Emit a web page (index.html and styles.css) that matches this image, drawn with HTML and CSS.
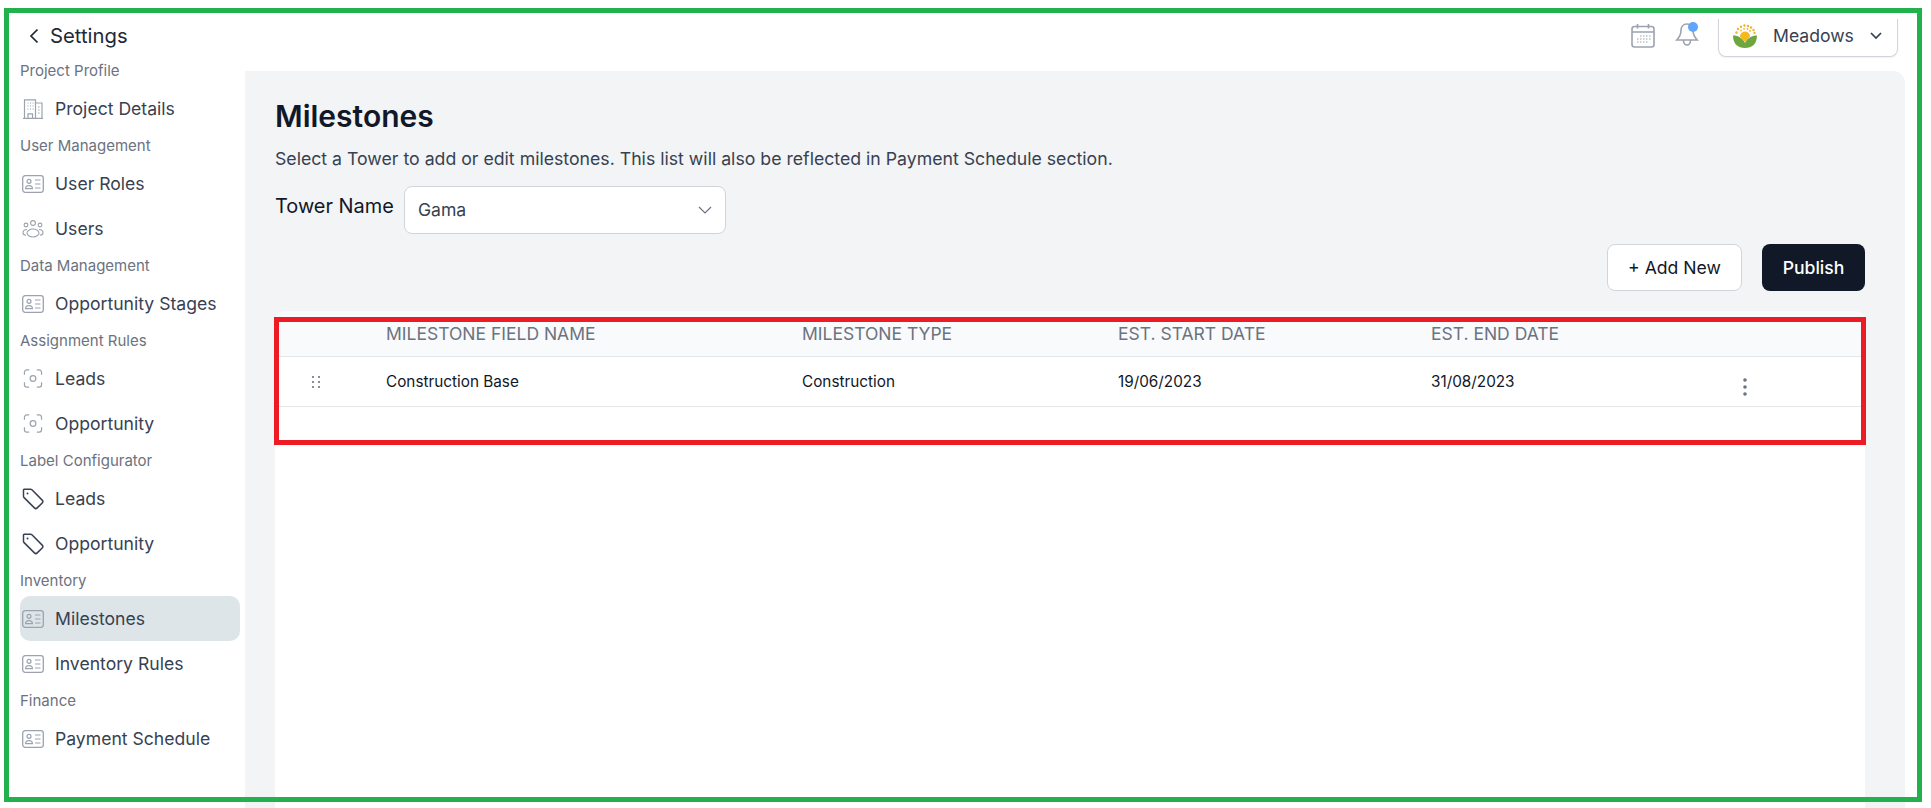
FILE: index.html
```html
<!DOCTYPE html>
<html lang="en">
<head>
<meta charset="utf-8">
<title>Milestones</title>
<link rel="stylesheet" href="styles.css">
</head>
<body>
<svg class="defs" width="0" height="0" aria-hidden="true">
  <symbol id="i-card" viewBox="0 0 22 18">
    <rect x="0.7" y="0.7" width="20.6" height="16.6" rx="2.5" fill="none" stroke="currentColor" stroke-width="1.3"/>
    <circle cx="7" cy="6.3" r="2" fill="none" stroke="currentColor" stroke-width="1.2"/>
    <path d="M3.6 13.6c0-2 1.5-3 3.4-3s3.4 1 3.4 3z" fill="none" stroke="currentColor" stroke-width="1.2"/>
    <path d="M13 5h5.5M13 9h5.5M13 13h5.5" fill="none" stroke="currentColor" stroke-width="1.2"/>
  </symbol>
  <symbol id="i-scan" viewBox="0 0 20 20">
    <path d="M1 6V3.5A2.5 2.5 0 0 1 3.500 1H6M14 1h2.500A2.500 2.500 0 0 1 19 3.500V6M19 14v2.500a2.500 2.500 0 0 1-2.500 2.500H14M6 19H3.500A2.500 2.500 0 0 1 1 16.500V14" fill="none" stroke="currentColor" stroke-width="1.300"/>
    <circle cx="10" cy="10" r="3" fill="none" stroke="currentColor" stroke-width="1.300"/>
  </symbol>
  <symbol id="i-tag" viewBox="0 0 22 22">
    <path d="M2.200 1.200h6.300a2 2 0 0 1 1.400.6l10.300 10.300a2 2 0 0 1 0 2.800l-5 5a2 2 0 0 1-2.800 0L2.100 9.600a2 2 0 0 1-.6-1.400V2a.8.8 0 0 1 .7-.8z" fill="none" stroke="currentColor" stroke-width="1.500"/>
    <circle cx="5.500" cy="5.500" r="1" fill="currentColor"/>
  </symbol>
</svg>

<div class="app">
  <aside class="sidebar">
    <div class="back">
      <svg class="back-icon" viewBox="0 0 10 16" width="10" height="16"><path d="M8.500 1.500L2 8l6.500 6.500" fill="none" stroke="currentColor" stroke-width="1.700"/></svg>
      <span>Settings</span>
    </div>
    <nav class="nav">
      <div class="nav-label">Project Profile</div>
      <a class="nav-item"><svg class="nav-icon building" viewBox="0 0 22 20"><path d="M1 19.300h20M2.500 19.300V.8h11v18.500M13.500 4h6.500v15.300M6 19.300v-4.500h4.500v4.500M5.500 4h1M8 4h1M10.500 4h1M5.500 7h1M8 7h1M10.500 7h1M5.500 10h1M8 10h1M10.500 10h1M16 8h1.500M16 11h1.500M16 14h1.500" fill="none" stroke="currentColor" stroke-width="1.200"/></svg>Project Details</a>
      <div class="nav-label">User Management</div>
      <a class="nav-item"><svg class="nav-icon"><use href="#i-card"/></svg>User Roles</a>
      <a class="nav-item"><svg class="nav-icon" viewBox="0 0 22 18"><g fill="none" stroke="currentColor" stroke-width="1.100"><circle cx="11" cy="3" r="2.400"/><circle cx="4" cy="5" r="1.900"/><circle cx="18" cy="5" r="1.900"/><ellipse cx="11" cy="13" rx="6" ry="4"/><path d="M5 9.500C2.500 9.500 1 11 1 13c0 1 1 2 3 2.200M17 9.500c2.500 0 4 1.500 4 3.500 0 1-1 2-3 2.200"/></g></svg>Users</a>
      <div class="nav-label">Data Management</div>
      <a class="nav-item"><svg class="nav-icon"><use href="#i-card"/></svg>Opportunity Stages</a>
      <div class="nav-label">Assignment Rules</div>
      <a class="nav-item"><svg class="nav-icon scan"><use href="#i-scan"/></svg>Leads</a>
      <a class="nav-item"><svg class="nav-icon scan"><use href="#i-scan"/></svg>Opportunity</a>
      <div class="nav-label">Label Configurator</div>
      <a class="nav-item"><svg class="nav-icon tag"><use href="#i-tag"/></svg>Leads</a>
      <a class="nav-item"><svg class="nav-icon tag"><use href="#i-tag"/></svg>Opportunity</a>
      <div class="nav-label">Inventory</div>
      <a class="nav-item active"><svg class="nav-icon"><use href="#i-card"/></svg>Milestones</a>
      <a class="nav-item"><svg class="nav-icon"><use href="#i-card"/></svg>Inventory Rules</a>
      <div class="nav-label">Finance</div>
      <a class="nav-item"><svg class="nav-icon"><use href="#i-card"/></svg>Payment Schedule</a>
    </nav>
  </aside>

  <div class="content">
    <header class="topbar">
      <svg class="top-icon" viewBox="0 0 24 25" width="24" height="25"><g fill="none" stroke="#9ca3af" stroke-width="1.600"><rect x="1" y="3.500" width="22" height="20.500" rx="2.500"/><path d="M1 9h22M6.500 1v4.500M17.500 1v4.500"/></g><path d="M9 13h1.500M12 13h1.500M15 13h1.500M18 13h1.500M6 16h1.500M9 16h1.500M12 16h1.500M15 16h1.500M18 16h1.500M6 19h1.500M9 19h1.500M12 19h1.500M15 19h1.500" stroke="#9ca3af" stroke-width="1.200"/></svg>
      <span class="bell">
        <svg viewBox="0 0 24 26" width="24" height="26"><path d="M12 3c-4 0-6 3-6 6.500 0 4.500-1.500 6.500-4.200 9.500h20.400C19.500 16 18 14 18 9.500 18 6 16 3 12 3zM8.500 19.500c0 2.500 1.500 4.500 3.500 4.500s3.500-2 3.500-4.500" fill="none" stroke="#9ca3af" stroke-width="1.600"/></svg>
        <i class="bell-dot"></i>
      </span>
      <div class="project">
        <svg class="logo" viewBox="0 0 24 24" width="24" height="24">
          <path d="M12 24C5 24 0 20 0 11.500c5 0 10 2.500 12 7.500 2-5 7-7.500 12-7.500C24 20 19 24 12 24z" fill="#6fa53f"/>
          <path d="M7 12.500a5 5 0 0 1 10 0L12 18z" fill="#f7b819"/>
          <g fill="#f3b32a"><circle cx="3.500" cy="8.500" r="1.200"/><circle cx="5" cy="5" r="1.200"/><circle cx="8" cy="2.800" r="1.200"/><circle cx="11.500" cy="1.500" r="1.200"/><circle cx="15" cy="2" r="1.200"/><circle cx="18" cy="3.500" r="1.200"/><circle cx="20.500" cy="6" r="1.200"/><circle cx="21.500" cy="9" r="1.200"/><circle cx="8" cy="6.500" r=".9"/><circle cx="11" cy="4.800" r=".9"/><circle cx="14.500" cy="5" r=".9"/><circle cx="17" cy="7" r=".9"/></g>
        </svg>
        <span class="project-name">Meadows</span>
        <svg viewBox="0 0 12 8" width="12" height="8"><path d="M1 1l5 5 5-5" fill="none" stroke="#374151" stroke-width="1.700"/></svg>
      </div>
    </header>

    <main class="panel">
      <h1 class="title">Milestones</h1>
      <p class="desc">Select a Tower to add or edit milestones. This list will also be reflected in Payment Schedule section.</p>
      <div class="tower">
        <label class="tower-label">Tower Name</label>
        <div class="select"><span>Gama</span><svg viewBox="0 0 14 8" width="14" height="8"><path d="M1 1l6 6 6-6" fill="none" stroke="#6b7280" stroke-width="1.200"/></svg></div>
      </div>
      <div class="actions">
        <button class="btn btn-light">+ Add New</button>
        <button class="btn btn-dark">Publish</button>
      </div>
      <section class="card">
        <div class="row row-head">
          <span></span>
          <span>MILESTONE FIELD NAME</span>
          <span>MILESTONE TYPE</span>
          <span>EST. START DATE</span>
          <span>EST. END DATE</span>
          <span></span>
        </div>
        <div class="row row-body">
          <svg class="drag" viewBox="0 0 10 14" width="10" height="14"><g fill="#6b7280"><circle cx="2" cy="2" r="1.100"/><circle cx="8" cy="2" r="1.100"/><circle cx="2" cy="7" r="1.100"/><circle cx="8" cy="7" r="1.100"/><circle cx="2" cy="12" r="1.100"/><circle cx="8" cy="12" r="1.100"/></g></svg>
          <span>Construction Base</span>
          <span>Construction</span>
          <span>19/06/2023</span>
          <span>31/08/2023</span>
          <svg class="kebab" viewBox="0 0 4 18" width="4" height="18"><g fill="#6b7280"><circle cx="2" cy="2" r="1.800"/><circle cx="2" cy="9" r="1.800"/><circle cx="2" cy="16" r="1.800"/></g></svg>
        </div>
      </section>
    </main>
  </div>
</div>

<div class="mark mark-green"></div>
<div class="mark mark-red"></div>
</body>
</html>
```

FILE: styles.css
```css
* { box-sizing: border-box; }
html, body { margin: 0; height: 100%; overflow: hidden; background: #fff; }
body { font-family: Inter, "Liberation Sans", sans-serif; color: #111827; position: relative; }
.defs { position: absolute; }

.app { display: flex; height: 808px; }

.sidebar { width: 245px; flex: none; padding-left: 20px; }
.back { height: 56px; padding: 17px 0 0 9px; display: flex; align-items: flex-start; gap: 11px; font-size: 20.3px; line-height: 38px; color: #1f2937; }
.back-icon { margin-top: 11px; color: #1f2937; }
.nav { width: 220px; }
.nav-label { height: 30px; line-height: 30px; font-size: 15px; color: #6b7280; }
.nav-item { height: 45px; display: flex; align-items: center; gap: 11px; padding-left: 2px; font-size: 17.6px; color: #374151; border-radius: 10px; }
.nav-item.active { background: #dde5e8; }
.nav-icon { width: 22px; height: 18px; flex: none; color: #9ca3af; }
.nav-icon.building { height: 20px; }
.nav-icon.scan { height: 19px; }
.nav-icon.tag { height: 22px; color: #374151; }

.content { flex: 1; min-width: 0; display: flex; flex-direction: column; padding-right: 26px; }
.topbar { height: 71px; flex: none; display: flex; align-items: flex-start; padding: 19px 7px 0 0; justify-content: flex-end; }
.top-icon { margin: 4px 20px 0 0; }
.bell { position: relative; width: 24px; height: 26px; margin: 2px 19px 0 0; }
.bell-dot { position: absolute; right: 1px; top: 1px; width: 10px; height: 10px; border-radius: 50%; background: #60a5fa; }
.project { width: 180px; height: 38px; display: flex; align-items: center; padding: 0 15px 4px 14px; background: #fff; border: 1px solid #d1d5db; border-top: 0; border-radius: 0 0 8px 8px; box-shadow: 0 1px 2px rgba(0,0,0,.06); }
.project-name { margin: 0 auto 0 16px; font-size: 17.6px; color: #374151; }

.panel { flex: 1; background: #f3f4f6; border-radius: 0 12px 0 0; padding: 0 40px 0 30px; min-height: 0; display: flex; flex-direction: column; }
.title { margin: 23px 0 0; height: 44px; line-height: 44px; font-size: 30px; font-weight: 600; color: #111827; }
.desc { margin: 7px 0 0; height: 28px; line-height: 28px; font-size: 17.7px; color: #374151; }
.tower { display: flex; gap: 10px; align-items: flex-start; margin-top: 13px; }
.tower-label { font-size: 19.95px; line-height: 40px; color: #111827; }
.select { width: 322px; height: 48px; display: flex; align-items: center; justify-content: space-between; padding: 0 13px 1px 13px; background: #fff; border: 1px solid #d1d5db; border-radius: 8px; font-size: 17.6px; color: #374151; }
.actions { display: flex; justify-content: flex-end; gap: 20px; margin-top: 10px; }
.btn { height: 47px; border-radius: 8px; font: 500 17.6px Inter, sans-serif; }
.btn-light { width: 135px; background: #fff; border: 1px solid #d1d5db; color: #111827; font-weight: 400; }
.btn-dark { width: 103px; background: #111827; border: 0; color: #fff; }
.card { flex: 1; margin-top: 20px; background: #fff; border-radius: 10px 10px 0 0; }
.row { display: grid; grid-template-columns: 111px 416px 316px 313px 306px 1fr; align-items: center; }
.row-head { height: 46px; background: #f9fafb; border-bottom: 1px solid #e5e7eb; border-radius: 10px 10px 0 0; font-size: 17.5px; color: #6b7280; padding-bottom: 1px; }
.row-body { height: 50px; border-bottom: 1px solid #e5e7eb; font-size: 15.3px; color: #111827; }
.drag { margin-left: 36px; }
.kebab { margin: 10px 0 0 6px; }

.mark { position: absolute; pointer-events: none; }
.mark-green { left: 4px; top: 8px; width: 1918px; height: 794px; border: 5px solid #22b14c; }
.mark-red { left: 274px; top: 317px; width: 1592px; height: 128px; border: 5px solid #ed1c24; }
```
